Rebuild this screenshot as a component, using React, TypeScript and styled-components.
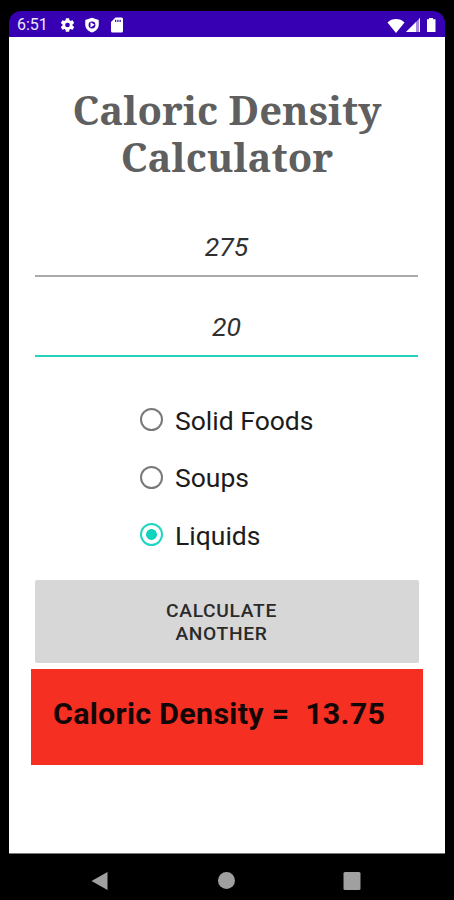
import React, { useState } from "react";
import styled, { createGlobalStyle } from "styled-components";

const GlobalStyle = createGlobalStyle`
  * { box-sizing: border-box; }
  html, body { margin: 0; background: #000; }
`;

const Device = styled.div`
  width: 454px;
  height: 900px;
  padding: 11px 9px 0;
  background: #000;
  font-family: Roboto, "Liberation Sans", sans-serif;
  display: flex;
  flex-direction: column;
  overflow: hidden;
`;

const StatusBar = styled.header`
  height: 26px;
  flex: none;
  padding: 2px 5px 0 8px;
  border-radius: 12px 12px 0 0;
  background: #3700b3;
  color: #fff;
  display: flex;
  align-items: center;
  justify-content: space-between;
`;

const StatusGroup = styled.div<{ $gap: number }>`
  display: flex;
  align-items: center;
  gap: ${(p) => p.$gap}px;
`;

const Clock = styled.span`
  width: 33px;
  margin-right: 2px;
  font-size: 16px;
  line-height: 24px;
  color: #eee6fb;
  white-space: nowrap;
`;

const Screen = styled.main`
  height: 817px;
  flex: none;
  background: #fff;
  border-bottom: 1px solid #777;
  display: flex;
  flex-direction: column;
  padding: 49px 22px 0 22px;
`;

const Title = styled.h1`
  margin: 0;
  height: 95px;
  color: #5f5f5f;
  font-family: "Noto Serif", "Droid Serif", "DejaVu Serif", serif;
  font-size: 40px;
  font-weight: 700;
  line-height: 47px;
  text-align: center;
  white-space: pre-line;
`;

const Field = styled.input<{ $active?: boolean }>`
  display: block;
  width: 383px;
  height: 60px;
  margin: 0 0 0 4px;
  padding: 0;
  border: 0;
  border-bottom: 2px solid ${(p) => (p.$active ? "#27d3bd" : "#aaa")};
  outline: 0;
  background: transparent;
  color: #303030;
  font: italic 400 26.6px Roboto, "Liberation Sans", sans-serif;
  text-align: center;
`;

const Fields = styled.div`
  padding-top: 36px;
  display: flex;
  flex-direction: column;
  gap: 20px;
`;

const Options = styled.div`
  padding: 35px 0 0 109px;
  display: flex;
  flex-direction: column;
`;

const Option = styled.label`
  height: 57.6px;
  display: flex;
  align-items: center;
  gap: 12px;
  color: #1c1c1c;
  font-size: 26.5px;
  line-height: 30px;
  white-space: nowrap;
`;

const Radio = styled.input`
  appearance: none;
  width: 23px;
  height: 23px;
  margin: -2px 0 0;
  border: 2px solid #797979;
  border-radius: 50%;
  flex: none;
  &:checked {
    border-color: #20d6c1;
    background: radial-gradient(circle, #10d4bd 5px, transparent 5.8px);
  }
`;

const Action = styled.button`
  width: 384px;
  height: 83px;
  flex: none;
  margin: 15px 0 0 4px;
  padding: 2px 11px 0 0;
  border: 0;
  border-radius: 2px;
  background: #d7d7d7;
  color: #2a2a2a;
  font: 500 19.2px/23px Roboto, "Liberation Sans", sans-serif;
  letter-spacing: 0.7px;
  text-align: center;
  white-space: pre-line;
`;

const Result = styled.output`
  height: 96px;
  flex: none;
  margin-top: 6px;
  padding: 27px 0 0 22px;
  background: #f52f22;
  color: #130606;
  font-size: 30.4px;
  font-weight: 700;
  line-height: 35px;
  letter-spacing: 0.3px;
  white-space: pre;
`;

const NavBar = styled.nav`
  height: 46px;
  padding: 8px 83px 0 80px;
  display: flex;
  justify-content: space-between;
`;

const StatusIcon = ({ w, h, box, d }: { w: number; h: number; box: string; d: string }) => (
  <svg width={w} height={h} viewBox={box} fill="currentColor" fillRule="evenodd">
    <path d={d} />
  </svg>
);

const foods = ["Solid Foods", "Soups", "Liquids"];

export default function App() {
  const [food, setFood] = useState("Liquids");
  const [calories, setCalories] = useState("275");
  const [weight, setWeight] = useState("20");

  return (
    <Device>
      <GlobalStyle />
      <StatusBar>
        <StatusGroup $gap={7}>
          <Clock>6:51</Clock>
          <StatusIcon
            w={17}
            h={18}
            box="0 0 24 24"
            d="M19.14 12.94c.04-.3.06-.61.06-.94s-.02-.64-.07-.94l2.03-1.58a.5.5 0 0 0 .12-.61l-1.92-3.32a.49.49 0 0 0-.59-.22l-2.39.96c-.5-.38-1.03-.7-1.62-.94L14.4 2.81A.48.48 0 0 0 13.92 2.4h-3.84a.47.47 0 0 0-.47.41l-.36 2.54c-.59.24-1.13.57-1.62.94l-2.39-.96a.48.48 0 0 0-.59.22L2.74 8.87a.47.47 0 0 0 .12.61l2.03 1.58c-.05.3-.09.63-.09.94s.02.64.07.94l-2.03 1.58a.5.5 0 0 0-.12.61l1.92 3.32c.12.22.37.29.59.22l2.39-.96c.5.38 1.03.7 1.62.94l.36 2.54c.05.24.24.41.48.41h3.84c.24 0 .44-.17.47-.41l.36-2.54c.59-.24 1.13-.56 1.62-.94l2.39.96c.22.08.47 0 .59-.22l1.92-3.32a.47.47 0 0 0-.12-.61zM12 15.3A3.3 3.3 0 1 1 12 8.7a3.3 3.3 0 0 1 0 6.6z"
          />
          <StatusIcon
            w={18}
            h={18}
            box="0 0 24 24"
            d="M12 2.2 3 5.3v6c0 5.5 3.8 9 9 10.7 5.2-1.7 9-5.2 9-10.7v-6zM12 7.3a4.6 4.6 0 1 1 0 9.2 4.6 4.6 0 0 1 0-9.2zM10 8.4l5.6 3.4L10 15.2z"
          />
          <StatusIcon
            w={18}
            h={18}
            box="0 0 24 24"
            d="M10 2h8a2 2 0 0 1 2 2v16a2 2 0 0 1-2 2H6a2 2 0 0 1-2-2V8zM9.4 5h1.6v3H9.4zM12.4 5H14v3h-1.6zM15.4 5H17v3h-1.6z"
          />
        </StatusGroup>
        <StatusGroup $gap={0}>
          <StatusIcon w={18} h={15} box="0 0 18 15" d="M9 15 .5 4.4C4.8-.1 13.2-.1 17.5 4.4z" />
          <svg width="16" height="16" viewBox="0 0 16 16">
            <path d="M1 15 15 1v14z" fill="#a98ade" />
            <path d="M1 15 11 5v10zM14 2l1-1v14h-1z" fill="#fff" />
          </svg>
          <svg width="19" height="16" viewBox="0 0 19 16">
            <path d="M6 2.2h2V1h4v1.2h2.5V15H6z" fill="#fff" />
          </svg>
        </StatusGroup>
      </StatusBar>
      <Screen>
        <Title>{"Caloric Density\nCalculator"}</Title>
        <Fields>
          <Field value={calories} onChange={(e) => setCalories(e.target.value)} aria-label="Calories" />
          <Field $active value={weight} onChange={(e) => setWeight(e.target.value)} aria-label="Weight" />
        </Fields>
        <Options>
          {foods.map((name) => (
            <Option key={name}>
              <Radio type="radio" name="food" checked={food === name} onChange={() => setFood(name)} />
              {name}
            </Option>
          ))}
        </Options>
        <Action>{"CALCULATE\nANOTHER"}</Action>
        <Result>{"Caloric Density =  13.75"}</Result>
      </Screen>
      <NavBar>
        <svg width="20" height="38" viewBox="0 0 20 38">
          <path d="M2.5 19 18.5 10v18z" fill="#a0a0a0" />
        </svg>
        <svg width="20" height="38" viewBox="0 0 20 38">
          <circle cx="10.5" cy="18.5" r="8.5" fill="#a0a0a0" />
        </svg>
        <svg width="20" height="38" viewBox="0 0 20 38">
          <rect x="1.5" y="10" width="17" height="18" rx="1.5" fill="#a0a0a0" />
        </svg>
      </NavBar>
    </Device>
  );
}
